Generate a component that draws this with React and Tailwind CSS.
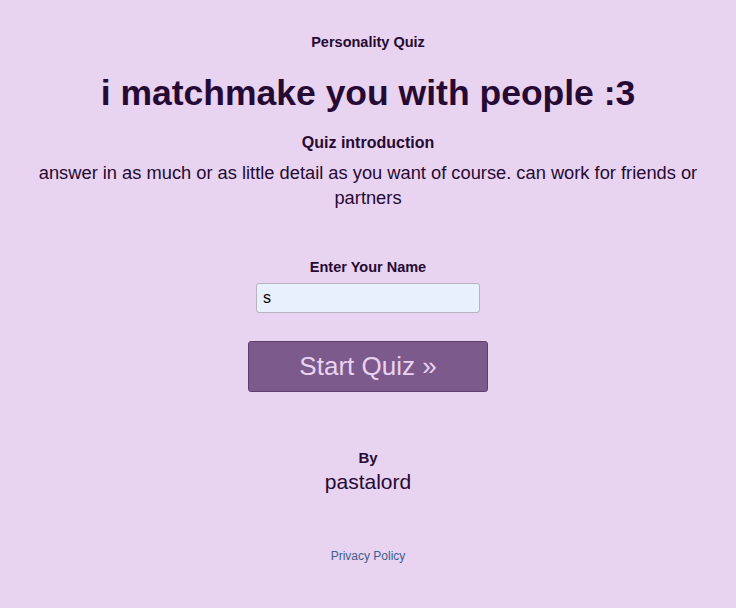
export default function App() {
  return (
    <div className="min-h-[608px] w-full bg-[#e8d3f0] text-[#260a33] text-center" style={{ fontFamily: '"Liberation Sans", Arial, sans-serif' }}>
      <div className="flex flex-col items-center px-[30px] pt-[33px]">
        <div className="text-[14.5px] font-bold leading-[18px]">Personality Quiz</div>
        <h1 className="mt-[21px] text-[35.5px] font-bold leading-[42px]">i matchmake you with people :3</h1>
        <div className="mt-[19px] text-[16px] font-bold leading-[20px]">Quiz introduction</div>
        <p className="mt-[7px] text-[18.3px] leading-[25px]">answer in as much or as little detail as you want of course. can work for friends or partners</p>
        <div className="mt-[48px] text-[14.5px] font-bold leading-[18px]">Enter Your Name</div>
        <input
          className="mt-[7px] h-[30px] w-[224px] rounded-[3px] border border-[#b9b3c0] bg-[#e8f0fe] px-[6px] text-[16px] text-black outline-none"
          defaultValue="s"
        />
        <button className="mt-[28px] h-[51px] w-[240px] rounded-[3px] border border-[#5e4070] bg-[#7d5a8c] text-[26px] text-[#ead2f1]">
          Start Quiz »
        </button>
        <div className="mt-[57px] text-[15px] font-bold leading-[18px]">By</div>
        <div className="mt-[2px] text-[21px] leading-[26px]">pastalord</div>
        <div className="mt-[54px] text-[12px] leading-[14px] text-[#3e5f8c]">Privacy Policy</div>
      </div>
    </div>
  );
}
